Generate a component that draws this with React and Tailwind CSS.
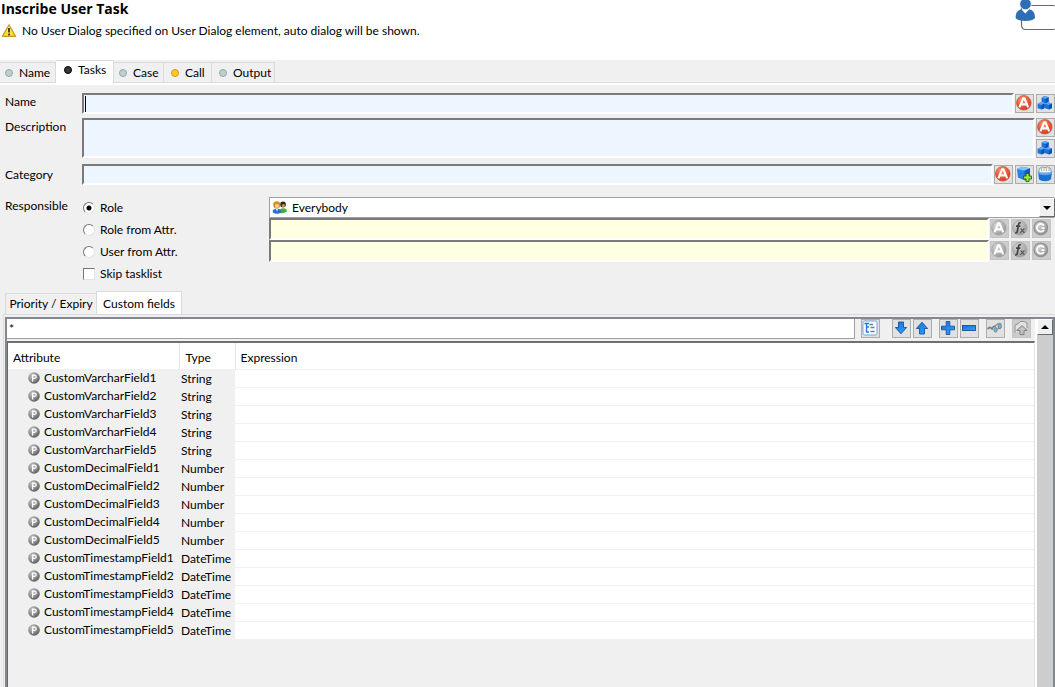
import React, { useState } from "react";

function Svg({ children, size = "size-4", box = "0 0 16 16" }) {
  return (
    <svg viewBox={box} className={`${size} block shrink-0`} aria-hidden="true">
      {children}
    </svg>
  );
}

function Gradients() {
  return (
    <svg width="0" height="0" className="absolute" aria-hidden="true">
      <defs>
        <radialGradient id="red" cx="0.4" cy="0.3" r="0.8">
          <stop offset="0" stopColor="#ff9a78" />
          <stop offset="0.5" stopColor="#ef5a36" />
          <stop offset="1" stopColor="#c8321a" />
        </radialGradient>
        <radialGradient id="grey" cx="0.35" cy="0.3" r="0.8">
          <stop offset="0" stopColor="#d2d2d2" />
          <stop offset="0.6" stopColor="#b0b0b0" />
          <stop offset="1" stopColor="#949494" />
        </radialGradient>
        <radialGradient id="dark" cx="0.35" cy="0.3" r="0.8">
          <stop offset="0" stopColor="#c4c4c4" />
          <stop offset="0.6" stopColor="#858585" />
          <stop offset="1" stopColor="#545454" />
        </radialGradient>
        <linearGradient id="blue" x1="0" y1="0" x2="1" y2="1">
          <stop offset="0" stopColor="#1b6fd8" />
          <stop offset="1" stopColor="#28a5ff" />
        </linearGradient>
        <linearGradient id="yellow" x1="0" y1="0" x2="0" y2="1">
          <stop offset="0" stopColor="#fff6a8" />
          <stop offset="1" stopColor="#ffd800" />
        </linearGradient>
      </defs>
    </svg>
  );
}

const LetterA = () => (
  <path d="M3.4 12.4 L7.2 3.4 H8.4 L12.2 12.4 M5 9.4 H10.6" fill="none" stroke="#fff" strokeWidth="2.1" />
);

const RedA = () => (
  <Svg>
    <circle cx="7.8" cy="7.8" r="7.3" fill="url(#red)" stroke="#b9573f" strokeWidth="0.7" />
    <LetterA />
  </Svg>
);

const GreyA = () => (
  <Svg>
    <circle cx="7.8" cy="7.8" r="7.3" fill="url(#grey)" stroke="#a0a0a0" strokeWidth="0.6" />
    <LetterA />
  </Svg>
);

const GreyFx = () => (
  <Svg>
    <circle cx="7.8" cy="7.8" r="7.3" fill="url(#grey)" stroke="#a0a0a0" strokeWidth="0.6" />
    <path d="M8.8 3 C7.2 2.4 6.7 3.4 6.4 5 L5.4 11 C5.1 12.6 4.4 13.2 3.2 12.8 M4 6.2 H8.4" fill="none" stroke="#444" strokeWidth="1.7" />
    <path d="M8.6 8.4 L12.4 12.8 M12.4 8.4 L8.2 12.8" stroke="#555" strokeWidth="1.1" />
  </Svg>
);

const GreyC = () => (
  <Svg>
    <circle cx="7.8" cy="7.8" r="7.4" fill="#8f8f8f" />
    <circle cx="7.8" cy="7.8" r="6.2" fill="url(#grey)" />
    <path d="M11 5.6 A3.9 3.9 0 1 0 11 10 M11.6 8.2 H8.6" fill="none" stroke="#fff" strokeWidth="1.7" />
  </Svg>
);

const Cube = ({ x, y }) => (
  <g transform={`translate(${x} ${y})`}>
    <path d="M0 1.6 L3 0 L7 1.2 L7 5.8 L4 7.4 L0 6 Z" fill="#1d6fdb" />
    <path d="M0 1.6 L3 0 L7 1.2 L4 2.9 Z" fill="#5aa9f7" />
    <path d="M4 2.9 L7 1.2 V5.8 L4 7.4 Z" fill="#0d50b4" />
  </g>
);

const Cubes = () => (
  <Svg>
    <Cube x="4.6" y="1" />
    <Cube x="0.6" y="7.2" />
    <Cube x="8" y="7.2" />
  </Svg>
);

const CubeAdd = () => (
  <Svg>
    <path d="M1 3 L6 0.8 L14 2.2 V11 L9 14.4 L2 11.6 Z" fill="#2484e4" />
    <path d="M1 3 L6 0.8 L14 2.2 L8.4 4.8 Z" fill="#7cc4ff" />
    <path d="M8.4 4.8 L14 2.2 V11 L9 14.4 Z" fill="#1358b4" />
    <path d="M10 7.5 H13 V10 H15.6 V13 H13 V15.6 H10 V13 H7.5 V10 H10 Z" fill="#9be33c" stroke="#26720e" strokeWidth="1" />
  </Svg>
);

const Drum = () => (
  <Svg>
    <path d="M1 6 H15 L14 13.2 C12 15.8 4 15.8 2 13.2 Z" fill="#1a6fd2" />
    <path d="M2 3 L5 1 L8 1.6 L11 0.8 L14 3 V7 H2 Z" fill="#f2f2ee" stroke="#888" strokeWidth="0.8" />
    <path d="M4.5 2 V5 M7 2 V5 M9.5 2 V5 M12 2 V5" stroke="#999" strokeWidth="0.7" />
    <path d="M0.8 5 C3 7.6 13 7.6 15.2 5 V7.2 C13 9.8 3 9.8 0.8 7.2 Z" fill="#5aacf8" />
  </Svg>
);

const Tree = () => (
  <Svg>
    <rect x="1" y="1" width="14" height="14" rx="1.5" fill="#f7fbff" stroke="#7ba3dc" />
    <path d="M2.5 3.5 H7 M4.5 3.5 V12.5 M4.5 7 H7 M4.5 12 H7" fill="none" stroke="#2476d8" strokeWidth="1.3" />
    <path d="M7.5 4.5 H11 M8.5 7.5 H12.5 M8.5 11.5 H12.5" stroke="#6f7e94" strokeWidth="1.5" />
  </Svg>
);

const ArrowDown = () => (
  <Svg>
    <path d="M5.5 2 H10.5 V7.5 H13.6 L8 13.8 L2.4 7.5 H5.5 Z" fill="url(#blue)" stroke="#1d4f9c" strokeWidth="0.9" />
  </Svg>
);

const ArrowUp = () => (
  <Svg>
    <path d="M5.5 14 H10.5 V8.5 H13.6 L8 2.2 L2.4 8.5 H5.5 Z" fill="url(#blue)" stroke="#1d4f9c" strokeWidth="0.9" />
  </Svg>
);

const Plus = () => (
  <Svg>
    <path d="M6.2 1.5 H9.8 V6.2 H14.5 V9.8 H9.8 V14.5 H6.2 V9.8 H1.5 V6.2 H6.2 Z" fill="url(#blue)" stroke="#1d4f9c" strokeWidth="0.9" />
  </Svg>
);

const Minus = () => (
  <Svg>
    <rect x="1.5" y="5.5" width="13" height="5" fill="url(#blue)" stroke="#1d4f9c" strokeWidth="0.9" />
  </Svg>
);

const Glasses = () => (
  <Svg>
    <path d="M1 9.4 Q1.4 7 3.4 7.6 L5 9 L6.6 6.6 L9 6" fill="none" stroke="#808080" strokeWidth="1.8" />
    <path d="M8 6 L11.5 3.4 L14.5 4 M10.4 8.4 L13.6 8.6" fill="none" stroke="#8c8c8c" strokeWidth="1.2" />
    <ellipse cx="8.6" cy="9.8" rx="1.7" ry="2.3" fill="#4fc3f7" stroke="#777" strokeWidth="0.8" />
    <ellipse cx="12.8" cy="6.2" rx="1.7" ry="2.3" fill="#4fc3f7" stroke="#777" strokeWidth="0.8" />
  </Svg>
);

const OpenUp = () => (
  <Svg>
    <path d="M2 13 V5 L5 4 L7 1.5 H11 L14 3 V8" fill="#e2e2e2" stroke="#929292" strokeWidth="1" />
    <path d="M3.6 10.5 L9 5.6 L14.2 10.5 H11 V14.6 H7 V10.5 Z" fill="#c4c4c4" stroke="#808080" strokeWidth="1" />
  </Svg>
);

const Warning = () => (
  <Svg>
    <path d="M8 1.8 L14.6 13.4 H1.4 Z" fill="url(#yellow)" stroke="#c49a28" strokeWidth="1.2" strokeLinejoin="round" />
    <path d="M8 5 V9.4" stroke="#3c3420" strokeWidth="1.8" />
    <circle cx="8" cy="11.4" r="1" fill="#3c3420" />
  </Svg>
);

const People = () => (
  <Svg>
    <circle cx="11" cy="4.4" r="2.9" fill="#2b2b22" />
    <circle cx="11.4" cy="5.8" r="1.7" fill="#c98a4d" />
    <path d="M8 13 V9.4 Q11 7 14.6 9.4 V11.8 Q11.6 13.8 8 13 Z" fill="#3fb13f" />
    <circle cx="4.8" cy="4.8" r="3.6" fill="#d98d1b" />
    <circle cx="5" cy="6" r="2.1" fill="#f7cd94" />
    <path d="M0.8 12.6 V10.4 Q1.6 8.6 4.8 8.8 Q8.4 8.6 9.2 10.4 V12.6 Q5 15 0.8 12.6 Z" fill="#2a6fcf" />
    <path d="M4 9 L5 11.4 L6 9 Z" fill="#fff" />
  </Svg>
);

const Param = () => (
  <Svg size="size-3" box="0 0 12 12">
    <circle cx="6" cy="6" r="5.8" fill="url(#dark)" />
    <path d="M4.6 9.4 V3.2 H6.6 Q8.2 3.4 8.2 4.8 Q8.2 6.3 6.6 6.4 H4.6" fill="none" stroke="#fff" strokeWidth="1.3" />
  </Svg>
);

function IconButton({ label, children, disabled }) {
  return (
    <button
      type="button"
      aria-label={label}
      disabled={disabled}
      className={`flex h-[19px] w-[19px] shrink-0 items-start justify-start border ${
        disabled ? "border-[#c4c4c4] bg-[#cccccc]" : "border-[#adadad] bg-[#e1e1e1]"
      }`}
    >
      {children}
    </button>
  );
}

const sunken =
  "block w-full min-w-0 flex-1 resize-none rounded-none border-2 border-t-[#7a7a7a] border-l-[#7a7a7a] border-r-white border-b-white px-1 outline-none";

const dots = {
  pale: "border-[#98a5a8] bg-[#bdd0d2]",
  black: "border-black bg-[#3a3a3a]",
  amber: "border-[#d79a10] bg-[#fbc926]",
};

const tabs = [
  { name: "Name", dot: "pale", width: "w-14 pl-[5px]" },
  { name: "Tasks", dot: "black", width: "w-[58px] pl-2" },
  { name: "Case", dot: "pale", width: "w-[50px] pl-[5px]" },
  { name: "Call", dot: "amber", width: "w-12 pl-[7px]" },
  { name: "Output", dot: "pale", width: "w-[63px] pl-[7px]" },
];

function MainTabs() {
  const [active, setActive] = useState("Tasks");
  return (
    <div role="tablist" className="flex h-[25px] items-end border-b-2 border-white shadow-[inset_0_-1px_0_#dadada]">
      {tabs.map((t) => (
        <button
          key={t.name}
          type="button"
          role="tab"
          aria-selected={active === t.name}
          onClick={() => setActive(t.name)}
          className={`flex shrink-0 items-center gap-[6px] border-t border-r border-[#dadada] ${t.width} ${
            active === t.name ? "h-[23px] bg-white pb-1" : "mb-px h-5 bg-[#f0f0f0]"
          }`}
        >
          <span className={`size-2 shrink-0 rounded-full border ${dots[t.dot]}`} />
          {t.name}
        </button>
      ))}
    </div>
  );
}

const responsibles = ["Role", "Role from Attr.", "User from Attr."];

function Responsible() {
  const [mode, setMode] = useState("Role");
  return (
    <div className="flex items-start">
      <div className="flex w-[187px] shrink-0 flex-col pl-px">
        {responsibles.map((r) => (
          <label key={r} className="flex h-[22px] items-center gap-[5px]">
            <input
              type="radio"
              name="responsible"
              checked={mode === r}
              onChange={() => setMode(r)}
              className="size-3 appearance-none rounded-full border border-t-[#777] border-r-[#e3e3e3] border-b-[#e3e3e3] border-l-[#777] bg-white checked:bg-[radial-gradient(circle,#000_2px,#fff_3px)]"
            />
            {r}
          </label>
        ))}
        <label className="flex h-[22px] items-center gap-[5px]">
          <input
            type="checkbox"
            className="size-3 appearance-none border border-t-[#777] border-r-[#e3e3e3] border-b-[#e3e3e3] border-l-[#777] bg-white checked:bg-black"
          />
          Skip tasklist
        </label>
      </div>
      <div className="flex min-w-0 flex-1 flex-col">
        <div className="relative">
          <select
            aria-label="Role"
            className="block h-[21px] w-full appearance-none rounded-none border border-t-[#a0a0a0] border-r-white border-b-[#a0a0a0] border-l-[#a0a0a0] bg-white pl-[22px] outline-none"
          >
            <option>Everybody</option>
          </select>
          <span className="pointer-events-none absolute top-[3px] left-[3px]">
            <People />
          </span>
          <span className="pointer-events-none absolute inset-y-px right-0 flex w-4 items-center justify-center border border-t-white border-r-[#696969] border-b-[#696969] border-l-white bg-[#f0f0f0]">
            <Svg size="size-2" box="0 0 8 8">
              <path d="M0 2 H8 L4 6 Z" />
            </Svg>
          </span>
        </div>
        {["Role attribute", "User attribute"].map((n) => (
          <div key={n} className="flex h-[22px] gap-px pr-1">
            <input aria-label={n} className={`${sunken} h-[22px] bg-[#ffffe1]`} />
            <div className="flex gap-[2px] pt-px">
              <IconButton label="Insert attribute" disabled><GreyA /></IconButton>
              <IconButton label="Insert function" disabled><GreyFx /></IconButton>
              <IconButton label="Insert class" disabled><GreyC /></IconButton>
            </div>
          </div>
        ))}
      </div>
    </div>
  );
}

const fields = [
  ["CustomVarcharField", "String"],
  ["CustomDecimalField", "Number"],
  ["CustomTimestampField", "DateTime"],
].flatMap(([name, type]) => [1, 2, 3, 4, 5].map((n) => ({ name: name + n, type })));

function FieldTable() {
  return (
    <table className="w-full table-fixed border-collapse">
      <colgroup>
        <col className="w-[171px]" />
        <col className="w-14" />
        <col />
      </colgroup>
      <thead>
        <tr className="h-[26px] bg-white text-left">
          <th className="border-r border-[#e5e5e5] p-0 pt-1 pl-[5px] font-normal">Attribute</th>
          <th className="border-r border-[#e5e5e5] p-0 pt-1 pl-[6px] font-normal">Type</th>
          <th className="border-b border-[#f0f0f0] p-0 pt-1 pl-[5px] font-normal">Expression</th>
        </tr>
      </thead>
      <tbody>
        {fields.map((f) => (
          <tr key={f.name} className="h-[18px]">
            <td className="p-0 pl-5">
              <span className="flex h-[17px] items-center gap-1 leading-4">
                <Param />
                {f.name}
              </span>
            </td>
            <td className="p-0 pt-[2px] pl-[2px] leading-4">{f.type}</td>
            <td className="border-b border-[#f0f0f0] bg-white p-0" />
          </tr>
        ))}
      </tbody>
    </table>
  );
}

function CustomFields() {
  return (
    <section className="flex flex-1 flex-col pl-[3px]">
      <div role="tablist" className="flex h-[23px] items-end pl-[2px]">
        <button type="button" role="tab" aria-selected="false" className="h-[21px] w-[91px] border border-r-0 border-b-0 border-[#dadada] whitespace-nowrap">
          Priority / Expiry
        </button>
        <button type="button" role="tab" aria-selected="true" className="h-[23px] w-[86px] border border-b-0 border-[#dadada] bg-white pt-px whitespace-nowrap">
          Custom fields
        </button>
      </div>
      <div className="flex flex-1 flex-col border-t border-l border-[#dadada] pt-[2px] pl-px">
        <div className="flex flex-1 items-stretch border-2 border-b-0 border-[#828790]">
          <div className="flex min-w-0 flex-1 flex-col">
            <div className="flex h-[22px] items-start pr-1">
              <input
                aria-label="Filter"
                defaultValue="*"
                className="h-5 min-w-0 flex-1 border-r border-b border-[#a0a0a0] bg-white pl-[2px] outline-none"
              />
              <div className="flex items-center gap-[7px] pl-[6px]">
                <div className="mr-[5px]"><IconButton label="Show tree"><Tree /></IconButton></div>
                <div className="flex gap-[2px]">
                  <IconButton label="Move down"><ArrowDown /></IconButton>
                  <IconButton label="Move up"><ArrowUp /></IconButton>
                </div>
                <div className="flex gap-[2px]">
                  <IconButton label="Add"><Plus /></IconButton>
                  <IconButton label="Remove"><Minus /></IconButton>
                </div>
                <IconButton label="Inspect"><Glasses /></IconButton>
                <IconButton label="Open" disabled><OpenUp /></IconButton>
              </div>
            </div>
            <div className="flex-1 border-t-2 border-r border-l border-t-[#707070] border-r-[#e3e3e3] border-l-[#696969]">
              <FieldTable />
            </div>
          </div>
          <div className="flex w-[18px] shrink-0 flex-col border-l-2 border-white bg-[#cdcdcd]">
            <button type="button" aria-label="Scroll up" className="flex h-4 w-full items-center justify-center border border-t-white border-r-[#696969] border-b-[#696969] border-l-white bg-[#f0f0f0]">
              <Svg size="size-2" box="0 0 8 8">
                <path d="M0 6 H8 L4 2 Z" />
              </Svg>
            </button>
          </div>
        </div>
      </div>
    </section>
  );
}

export default function App() {
  return (
    <div className="flex min-h-screen flex-col bg-[#f0f0f0] font-[Lato,'Open_Sans',sans-serif] text-xs leading-[18px] text-black">
      <Gradients />
      <header className="flex h-[60px] justify-between overflow-hidden bg-white">
        <div>
          <h1 className="pl-px font-['Open_Sans',sans-serif] text-sm leading-[18px] font-bold">Inscribe User Task</h1>
          <p className="flex items-center gap-[5px] pt-1 pl-px">
            <Warning />
            No User Dialog specified on User Dialog element, auto dialog will be shown.
          </p>
        </div>
        <svg viewBox="0 0 40 31" className="h-[31px] w-10 shrink-0" aria-hidden="true">
          <path d="M39.6 6 L38.6 5.5 H6.5 V25 Q6.5 29.5 11 29.5 H38.6 L39.6 29" fill="none" stroke="#6b6b6b" strokeWidth="1.2" />
          <circle cx="10.5" cy="4" r="5.8" fill="#2e6fb3" stroke="#fff" strokeWidth="0.8" />
          <path d="M0.6 18 Q0.6 10.5 6.2 9.2 L10.3 13.6 L14.4 9.2 Q20 10.5 20 18 Q18 21 10.3 21 Q2.6 21 0.6 18 Z" fill="#2e6fb3" />
        </svg>
      </header>
      <MainTabs />
      <main className="flex flex-1 flex-col">
        <div className="grid grid-cols-[77px_1fr] pt-2 pl-[5px]">
          <label htmlFor="name">Name</label>
          <div className="relative mb-1 flex items-center gap-px">
            <input id="name" className={`${sunken} h-[21px] bg-[#edf6ff]`} />
            <span className="pointer-events-none absolute top-[3px] left-[3px] h-4 w-px bg-black" />
            <div className="flex gap-[2px]">
              <IconButton label="Name attribute"><RedA /></IconButton>
              <IconButton label="Name content"><Cubes /></IconButton>
            </div>
          </div>
          <label htmlFor="description">Description</label>
          <div className="mb-[6px] flex items-start gap-px">
            <textarea id="description" className={`${sunken} h-10 bg-[#edf6ff]`} />
            <div className="flex flex-col gap-[2px]">
              <IconButton label="Description attribute"><RedA /></IconButton>
              <IconButton label="Description content"><Cubes /></IconButton>
            </div>
          </div>
          <label htmlFor="category" className="pt-[2px]">Category</label>
          <div className="mb-3 flex items-center gap-px">
            <input id="category" className={`${sunken} h-[21px] bg-[#edf6ff]`} />
            <div className="flex gap-[2px]">
              <IconButton label="Category attribute"><RedA /></IconButton>
              <IconButton label="New category"><CubeAdd /></IconButton>
              <IconButton label="Choose category"><Drum /></IconButton>
            </div>
          </div>
          <span>Responsible</span>
          <Responsible />
        </div>
        <div className="h-[6px]" />
        <CustomFields />
      </main>
    </div>
  );
}
